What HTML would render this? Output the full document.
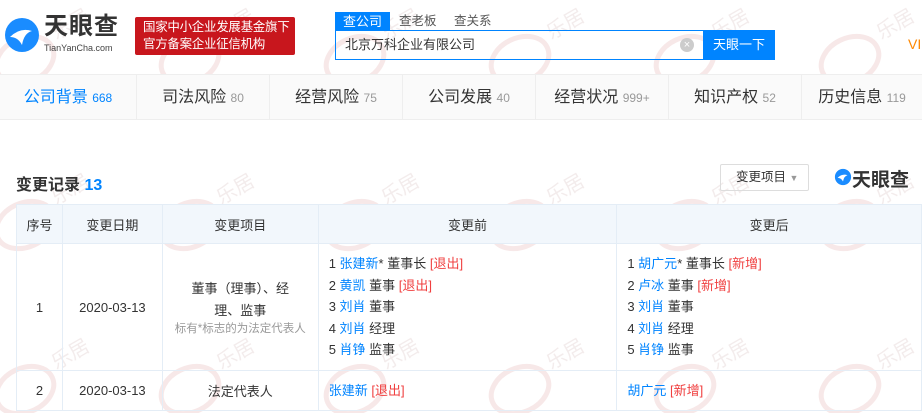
<!DOCTYPE html>
<html><head><meta charset="utf-8"><style>
*{margin:0;padding:0;box-sizing:border-box}
body{width:922px;height:413px;overflow:hidden;background:#fff;font-family:"Liberation Sans","Noto Sans CJK SC",sans-serif;color:#333;position:relative;font-size:13px}
.abs{position:absolute}
.nav{position:absolute;top:74px;left:0;width:922px;height:46px;background:#fafafa;border-top:1px solid #eee;border-bottom:1px solid #eee}
.nav div{position:absolute;top:0;height:45px;line-height:45px;font-size:16px;color:#333;border-right:1px solid #eee;text-align:center}
.nav span{font-size:12px;color:#999}
table{position:absolute;left:16px;top:204px;border-collapse:collapse;font-size:13px}
td,th{border:1px solid #e4edf6;text-align:center;font-weight:normal;color:#333}
th{background:#f2f7fc;height:39px}
.l{text-align:left;padding-left:10px;line-height:21.5px}
.b{color:#0084ff}.r{color:#f04040}
</style></head><body>
<svg class="abs" style="left:0;top:0" width="922" height="413"><defs><pattern id="p" width="165" height="165" patternUnits="userSpaceOnUse" x="-20" y="-50"><g transform="rotate(-25 45 110)" fill="none" stroke="rgba(215,140,140,0.2)" stroke-width="5"><ellipse cx="45" cy="110" rx="30" ry="22"/></g><text x="75" y="85" font-size="20" fill="rgba(200,170,170,0.22)" transform="rotate(-30 85 85)">乐居</text></pattern></defs><rect width="922" height="413" fill="url(#p)"/></svg>
<svg class="abs" style="left:2px;top:15px" width="40" height="40" viewBox="0 0 40 40"><circle cx="20" cy="20" r="17" fill="#1a8cff"/><path d="M8 22 Q18 12 30 16 Q22 18 20 30 Q16 22 8 22Z" fill="#fff"/></svg>
<div class="abs" style="left:44px;top:14px;font-size:24px;line-height:26px;font-weight:bold;color:#333;letter-spacing:1px">天眼查</div>
<div class="abs" style="left:44px;top:43px;font-size:9px;line-height:10px;color:#444">TianYanCha.com</div>
<div class="abs" style="left:135px;top:17px;width:160px;height:38px;background:#c8161d;border-radius:2px;color:#fff;font-size:12.5px;line-height:17px;padding:2px 4px 2px 8px;white-space:nowrap;letter-spacing:-0.3px">国家中小企业发展基金旗下<br>官方备案企业征信机构</div>
<div class="abs" style="left:335px;top:12px;width:55px;height:19px;background:#0084ff;color:#fff;font-size:13px;text-align:center;line-height:19px">查公司</div>
<div class="abs" style="left:399px;top:12px;font-size:12.5px;color:#555;line-height:19px">查老板</div>
<div class="abs" style="left:454px;top:12px;font-size:12.5px;color:#555;line-height:19px">查关系</div>
<div class="abs" style="left:335px;top:30px;width:370px;height:30px;border:1px solid #0084ff;font-size:13px;line-height:28px;padding-left:9px">北京万科企业有限公司</div>
<div class="abs" style="left:680px;top:38px;width:14px;height:14px;border-radius:50%;background:#ccc;color:#fff;font-size:11px;line-height:14px;text-align:center">×</div>
<div class="abs" style="left:703px;top:30px;width:72px;height:30px;background:#0084ff;color:#fff;font-size:13px;line-height:30px;text-align:center">天眼一下</div>
<div class="abs" style="left:908px;top:36px;font-size:14px;color:#f80">VI</div>
<div class="nav">
<div style="left:0;width:137px;color:#0084ff">公司背景 <span style="color:#0084ff">668</span></div>
<div style="left:137px;width:133px">司法风险 <span>80</span></div>
<div style="left:270px;width:133px">经营风险 <span>75</span></div>
<div style="left:403px;width:133px">公司发展 <span>40</span></div>
<div style="left:536px;width:133px">经营状况 <span>999+</span></div>
<div style="left:669px;width:133px">知识产权 <span>52</span></div>
<div style="left:802px;width:120px;border:0">历史信息 <span>119</span></div>
</div>
<div class="abs" style="left:16px;top:171px;font-size:16px;font-weight:bold;color:#333">变更记录 <span style="color:#0084ff">13</span></div>
<div class="abs" style="left:720px;top:164px;width:89px;height:27px;border:1px solid #ddd;border-radius:2px;font-size:12.5px;line-height:25px;padding-left:15px">变更项目 <span style="color:#999;font-size:9px">▼</span></div>
<svg class="abs" style="left:834px;top:168px" width="18" height="18" viewBox="0 0 40 40"><circle cx="20" cy="20" r="18" fill="#1a8cff"/><path d="M8 22 Q18 12 30 16 Q22 18 20 30 Q16 22 8 22Z" fill="#fff"/></svg>
<div class="abs" style="left:852px;top:165px;font-size:19px;font-weight:bold;color:#333">天眼查</div>
<table>
<tr><th style="width:46px">序号</th><th style="width:100px">变更日期</th><th style="width:156px">变更项目</th><th style="width:299px">变更前</th><th style="width:305px">变更后</th></tr>
<tr style="height:127px"><td>1</td><td>2020-03-13</td><td style="line-height:22px">董事（理事）、经<br>理、监事<br><span style="font-size:11.5px;color:#999;line-height:14px;display:block">标有*标志的为法定代表人</span></td>
<td class="l">1 <span class="b">张建新</span>* 董事长 <span class="r">[退出]</span><br>2 <span class="b">黄凯</span> 董事 <span class="r">[退出]</span><br>3 <span class="b">刘肖</span> 董事<br>4 <span class="b">刘肖</span> 经理<br>5 <span class="b">肖铮</span> 监事</td>
<td class="l">1 <span class="b">胡广元</span>* 董事长 <span class="r">[新增]</span><br>2 <span class="b">卢冰</span> 董事 <span class="r">[新增]</span><br>3 <span class="b">刘肖</span> 董事<br>4 <span class="b">刘肖</span> 经理<br>5 <span class="b">肖铮</span> 监事</td></tr>
<tr style="height:40px"><td>2</td><td>2020-03-13</td><td>法定代表人</td><td class="l"><span class="b">张建新</span> <span class="r">[退出]</span></td><td class="l"><span class="b">胡广元</span> <span class="r">[新增]</span></td></tr>
</table>
</body></html>
